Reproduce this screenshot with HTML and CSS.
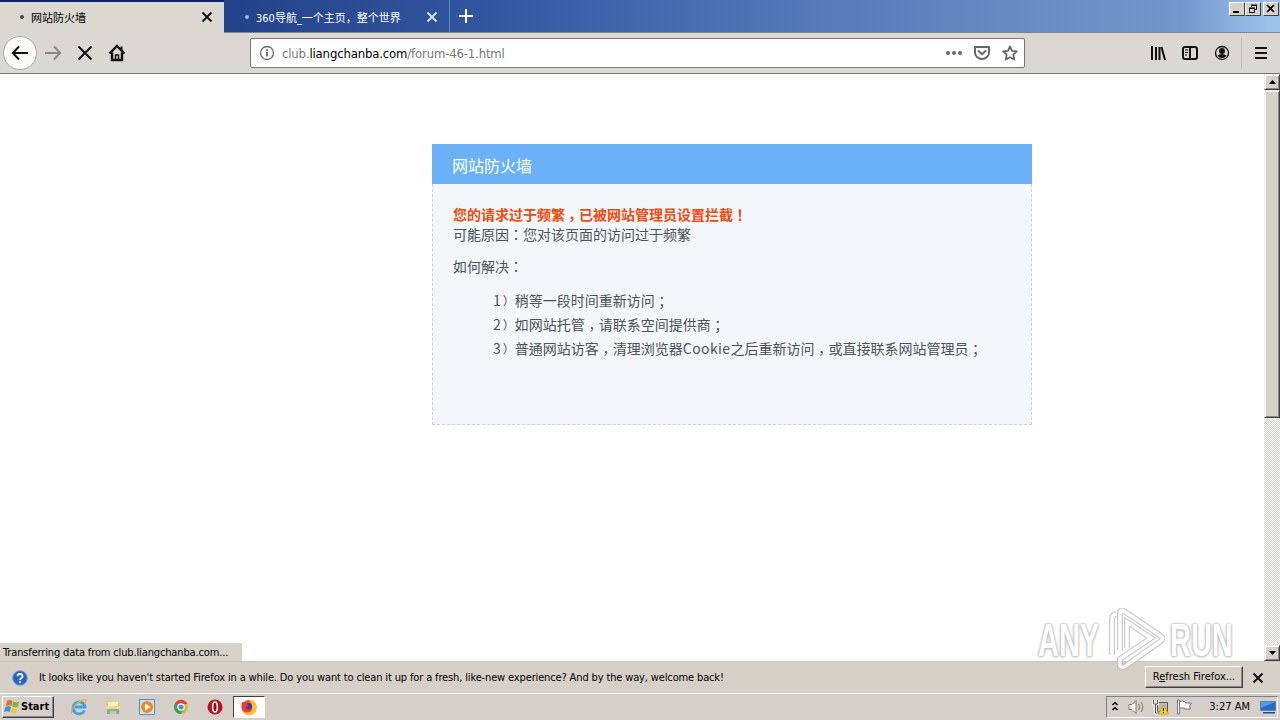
FILE: index.html
```html
<!DOCTYPE html>
<html lang="en">
<head>
  <meta charset="UTF-8" />
  <title>网站防火墙</title>
  <link rel="stylesheet" href="styles.css">
</head>
<body>
  <div class="tabs">
    <div class="tab active">
      <i class="dot"></i><span class="tab-title">网站防火墙</span>
      <svg width="12" height="12" viewBox="0 0 12 12"><path d="M1.5 1.5l9 9M10.500 1.500l-9 9"/></svg>
    </div>
    <div class="tab">
      <i class="dot"></i><span class="tab-title">360导航_一个主页，整个世界</span>
      <svg width="12" height="12" viewBox="0 0 12 12"><path d="M1.500 1.500l9 9M10.500 1.500l-9 9"/></svg>
    </div>
    <div class="new-tab"><svg width="16" height="16" viewBox="0 0 16 16"><path d="M8 1v14M1 8h14"/></svg></div>
    <div class="win-buttons">
      <b><svg width="14" height="12" viewBox="0 0 14 12"><path d="M3 9h6" stroke-width="2"/></svg></b>
      <b><svg width="14" height="12" viewBox="0 0 14 12"><path d="M5.500 4V2.500h5v4H9M5 2h6M3.500 5.500h5v4h-5zM3 5h6"/></svg></b>
      <b class="close"><svg width="14" height="12" viewBox="0 0 14 12"><path d="M3 2l7 7M10 2L3 9" stroke-width="1.700"/></svg></b>
    </div>
  </div>

  <div class="toolbar">
    <div class="nav">
      <span class="back"><svg width="18" height="18" viewBox="0 0 18 18"><path d="M17 9H2M8 2.500L1.800 9 8 15.500"/></svg></span>
      <svg class="off" width="18" height="18" viewBox="0 0 18 18"><path d="M1 9h15M10 2.500L16.200 9 10 15.500"/></svg>
      <svg width="18" height="18" viewBox="0 0 18 18"><path d="M2.500 2.500l13 13M15.500 2.500l-13 13"/></svg>
      <svg width="18" height="18" viewBox="0 0 18 18"><path d="M1.500 9.500L9 2l7.500 7.500M4 8.500V16h10V8.500" stroke-width="2.400"/><path d="M13.500 2.500v4"/><path d="M7.500 15v-4h3v4" stroke-width="1.500"/></svg>
    </div>
    <div class="urlbar">
      <svg width="16" height="16" viewBox="0 0 16 16"><circle cx="8" cy="8" r="6.500" stroke-width="1.300"/><path d="M8 7v4.500M8 4.200v1.800" stroke-width="1.800"/></svg>
      <span class="url">club.<em>liangchanba.com</em>/forum-46-1.html</span>
      <svg width="16" height="16" viewBox="0 0 16 16"><g class="fill"><circle cx="2" cy="8" r="2"/><circle cx="8" cy="8" r="2"/><circle cx="14" cy="8" r="2"/></g></svg>
      <svg width="16" height="16" viewBox="0 0 16 16"><path d="M1 2h14v5.500a7 6.500 0 0 1-14 0z" stroke-linejoin="round"/><path d="M4.500 6L8 9.200 11.500 6" stroke-linecap="round"/></svg>
      <svg width="16" height="16" viewBox="0 0 16 16"><path d="M8 1.500l2 4.300 4.800.6-3.500 3.300.9 4.800L8 12.200l-4.200 2.300.9-4.800L1.200 6.400 6 5.800z" stroke-linejoin="round" stroke-width="1.800"/></svg>
    </div>
    <div class="tools">
      <svg width="16" height="16" viewBox="0 0 16 16"><path d="M2 1v14M6 2v13M9.500 2v13M11.500 2l3.500 13"/></svg>
      <svg width="16" height="16" viewBox="0 0 16 16"><rect x="1" y="2" width="14" height="12" rx="2"/><path d="M8 2v12"/><path d="M3 5h3M3 7.500h3M3 10h2" stroke-width="1"/></svg>
      <svg width="16" height="16" viewBox="0 0 16 16"><circle cx="8" cy="8" r="6.500" stroke-width="1.300"/><g class="fill"><circle cx="8" cy="6" r="3"/><path d="M3.500 10.500Q8 7.500 12.500 10.500 11 13 8 13T3.500 10.500z"/></g></svg>
      <i class="line"></i>
      <svg width="14" height="16" viewBox="0 0 14 16"><path d="M1 3h12M1 8h12M1 13h12"/></svg>
    </div>
  </div>

  <div class="view">
    <div class="page">
      <div class="box">
        <h1>网站防火墙</h1>
        <div class="content">
          <p class="warn">您的请求过于频繁<i class="low">，</i>已被网站管理员设置拦截！</p>
          <p>可能原因：您对该页面的访问过于频繁</p>
          <p class="how">如何解决：</p>
          <ul>
            <li>1<i class="paren">）</i>稍等一段时间重新访问<i class="low semi">；</i></li>
            <li>2<i class="paren">）</i>如网站托管<i class="low">，</i>请联系空间提供商<i class="low semi">；</i></li>
            <li>3<i class="paren">）</i>普通网站访客<i class="low">，</i>清理浏览器<span class="latin">Cookie</span>之后重新访问<i class="low">，</i>或直接联系网站管理员<i class="low semi">；</i></li>
          </ul>
        </div>
      </div>
    </div>
    <div class="scrollbar">
      <div class="arrow"><svg width="7" height="4" viewBox="0 0 7 4"><path d="M0 4h7L3.500 0z"/></svg></div>
      <div class="thumb"></div>
      <div class="arrow down"><svg width="7" height="4" viewBox="0 0 7 4"><path d="M0 0h7L3.500 4z"/></svg></div>
    </div>
    <div class="status">Transferring data from club.liangchanba.com...</div>
  </div>

  <div class="notice">
    <svg width="16" height="16" viewBox="0 0 16 16"><circle cx="8" cy="8" r="7.300" fill="#2862c8" stroke="#7c9dce"/><path d="M5.500 6.200a2.500 2.300 0 1 1 3.700 2Q8 9 8 10" fill="none" stroke="#fff" stroke-width="1.800"/><circle cx="8" cy="12" r="1.100" fill="#fff"/></svg>
    <span class="message">It looks like you haven't started Firefox in a while. Do you want to clean it up for a fresh, like-new experience? And by the way, welcome back!</span>
    <button>R<u>e</u>fresh Firefox...</button>
    <svg class="dismiss" width="12" height="12" viewBox="0 0 12 12"><path d="M1.500 1.500l9 9M10.500 1.500l-9 9"/></svg>
  </div>

  <div class="taskbar">
    <div class="start">
      <svg width="16" height="16" viewBox="0 0 16 16"><path d="M3 2q3-2 5.500 0L7.300 7Q5 5.300 1.800 7z" fill="#ed6b29"/><path d="M9.200 2.500q3 1.500 6 0L14 7.500q-3 1.500-5.800 0z" fill="#75b943"/><path d="M1.500 8q3-1.700 5.500 0l-1.200 5Q3 11.300 0 13z" fill="#3d8fd8"/><path d="M7.800 8.500q3 1.500 5.800 0l-1.200 5q-3 1.500-5.900 0z" fill="#f6c62e"/></svg>
      <span>Start</span>
    </div>
    <div class="launch">
      <svg width="18" height="18" viewBox="0 0 18 18"><path d="M14.500 12.500A6 6 0 1 1 15 9H5" fill="none" stroke="#36a5dc" stroke-width="2.800"/><path d="M2 15.500C-1 12 9 2 15 1.500q2 .5 0 4" fill="none" stroke="#e0b23e" stroke-width="1.300"/></svg>
      <svg width="18" height="18" viewBox="0 0 18 18"><path d="M2 3h6l1 2h7v11H2z" fill="#ecc75a"/><path d="M4 4h10v6H4z" fill="#fff3bf"/><path d="M2 8h14v4H2z" fill="#f5dc84"/><path d="M3 16v-5h12v5h-3v-3H6v3z" fill="#63b2dc"/></svg>
      <svg width="18" height="18" viewBox="0 0 18 18"><path d="M1.500 1.500h15v15h-15z" fill="#c9e3f5" stroke="#4794c9"/><circle cx="9" cy="9" r="6" fill="#f18a19"/><path d="M7 5.500v7L12.500 9z" fill="#fff"/></svg>
      <svg width="18" height="18" viewBox="0 0 18 18"><circle cx="9" cy="9" r="7" fill="#ddb92f"/><path d="M3 5.300A7 7 0 0 1 15.500 6H9L6 10z" fill="#d9483b"/><path d="M3 5.300A7 7 0 0 0 9 16l3-5-6-1z" fill="#3aa257"/><circle cx="9" cy="9" r="3.200" fill="#4a8de0" stroke="#fff" stroke-width="1.200"/></svg>
      <svg width="18" height="18" viewBox="0 0 18 18"><circle cx="9" cy="9" r="7.500" fill="#b51722"/><ellipse cx="9" cy="9" rx="2.300" ry="5" fill="#8e1018" stroke="#fff" stroke-width="1.500"/></svg>
      <div class="running"><svg width="18" height="18" viewBox="0 0 18 18"><circle cx="9" cy="9.500" r="7.500" fill="#f4502a"/><path d="M9 2q7-1 7.500 7T9 17q-5 0-6-4 6 3 9-2 1-5-3-9z" fill="#ffc22c"/><circle cx="8.500" cy="8.500" r="3.600" fill="#423aa0"/><path d="M2 4q3 0 4 2l3 1-3 2q0 4 6 2-2 5-7 3-5-3-3-10z" fill="#f13a37"/></svg></div>
    </div>
    <div class="tray">
      <svg width="8" height="12" viewBox="0 0 8 12"><path d="M1.500 4l2.500-2.500L6.500 4M1.500 9L4 6.500 6.500 9" stroke="#000" stroke-width="1.500" fill="none"/></svg>
      <svg width="17" height="16" viewBox="0 0 17 16"><path d="M1 5.500h3l4-4v13l-4-4H1z" fill="#fff" stroke="#777"/><path d="M10.500 5q2 3 0 6M13 3q3.500 5 0 10" fill="none" stroke="#888" stroke-width="1.200"/></svg>
      <svg width="17" height="16" viewBox="0 0 17 16"><path d="M5.500 3.500h10v9h-10z" fill="#bbb" stroke="#555"/><path d="M1.500 1v4h4V1M3.500 5v9h4" fill="none" stroke="#fff" stroke-width="2.500"/><path d="M1.500 1v4h4V1M3.500 5v9h4" fill="none" stroke="#555"/><path d="M11.500 6l5 9h-10z" fill="#ffd91c" stroke="#b99500" stroke-width=".7"/><path d="M11.500 9v3M11.500 13v1" stroke="#222" stroke-width="1.200"/></svg>
      <svg width="17" height="16" viewBox="0 0 17 16"><path d="M1.500 1h2v14h-2z" fill="#fff" stroke="#777"/><path d="M3.500 2.500q3-1 6 .5v1h6l-2 3 1 3H8.500V9h-5z" fill="#fff" stroke="#777"/></svg>
      <span class="clock">3:27 AM</span>
      <svg width="16" height="14" viewBox="0 0 16 14"><path d="M.5 1.500h15v9H.5z" fill="#266cc4" stroke="#5b82af"/><path d="M1 2h14L1 8z" fill="#549be4"/><path d="M3 12h12v1.500H3z" fill="#1a4e88"/></svg>
    </div>
  </div>

  <div class="watermark">
    <span>ANY</span>
    <svg width="58" height="64" viewBox="0 0 58 64"><path class="shade" d="M5 47V11q0-4 4-5M13 42V5q0-4 4-2l37 25q3 3 0 5L20 57q-5 4-7 1v-7l31-21-24-16v26"/><path d="M5 47V11q0-4 4-5M13 42V5q0-4 4-2l37 25q3 3 0 5L20 57q-5 4-7 1v-7l31-21-24-16v26"/></svg>
    <span>RUN</span>
  </div>
</body>
</html>
```
FILE: styles.css
```css
* {
  box-sizing: border-box;
}
body {
  margin: 0;
  width: 1280px;
  height: 720px;
  overflow: hidden;
  position: relative;
  display: flex;
  flex-direction: column;
  background: #fff;
  color: #000;
  font-family: Tahoma, "DejaVu Sans Condensed", "Noto Sans CJK SC", sans-serif;
  font-size: 11px;
}
svg {
  flex: none;
  display: block;
}
.tabs svg, .toolbar svg, .dismiss {
  fill: none;
  stroke: #111;
  stroke-width: 2;
}
.tabs {
  height: 33px;
  flex: none;
  display: flex;
  background: linear-gradient(90deg, #1e3c7d 0, #25438a 240px, #3156a0 480px, #5277b8 780px, #6689c2 1000px, #7296cb 1180px, #9dc2ec 1270px);
  border-bottom: 1px solid #80868f;
}
.tab {
  width: 226px;
  padding: 1px 11px 0 21px;
  display: flex;
  align-items: center;
  color: #fff;
  border-right: 1px solid #7187b5;
}
.tab svg {
  margin-left: auto;
  stroke: #dbe5f5;
  stroke-width: 1.8;
}
.tab.active {
  width: 224px;
  height: 33px;
  background: #dbd8d2;
  color: #000;
  border-top: 2px solid #0a246a;
  border-right: 0;
  padding: 0 11px 1px 20px;
}
.tab.active svg {
  stroke: #111;
}
.dot {
  width: 4px;
  height: 4px;
  border-radius: 2px;
  background: #9dbbe6;
  margin-right: 7px;
}
.tab.active .dot {
  background: #444;
}
.tab-title {
  white-space: nowrap;
}
.new-tab {
  padding: 8px;
}
.new-tab svg {
  stroke: #fff;
}
.win-buttons {
  margin: 2px 1px 0 auto;
  display: flex;
}
.win-buttons b {
  width: 16px;
  height: 14px;
  background: #d6d2ca;
  border: 1px solid;
  border-color: #fff #404040 #404040 #fff;
}
.win-buttons .close {
  margin-left: 2px;
}
.win-buttons svg {
  stroke: #000;
  stroke-width: 1;
}
.toolbar {
  height: 41px;
  flex: none;
  display: flex;
  align-items: center;
  background: #dbd8d3;
  border-bottom: 1px solid #777;
}
.nav {
  width: 250px;
  padding-left: 3px;
  display: flex;
  align-items: center;
  gap: 14px;
}
.back {
  width: 34px;
  height: 34px;
  margin-right: -7px;
  border: 1px solid #aaa;
  border-radius: 50%;
  background: #fafaf8;
  display: flex;
  align-items: center;
  justify-content: center;
}
.toolbar .off {
  stroke: #8b8985;
}
.urlbar {
  width: 775px;
  height: 30px;
  padding: 0 6px 0 8px;
  display: flex;
  align-items: center;
  gap: 12px;
  background: #fff;
  border: 1px solid #777;
  border-radius: 2px;
}
.toolbar .urlbar svg {
  stroke: #666;
}
.url {
  flex: 1;
  margin-left: -5px;
  font-size: 13px;
  letter-spacing: -0.16px;
  color: #777;
}
.url em {
  font-style: normal;
  color: #000;
}
.toolbar .fill {
  fill: #111;
  stroke: none;
}
.toolbar .urlbar .fill {
  fill: #666;
}
.tools {
  margin-left: auto;
  padding-right: 12px;
  display: flex;
  align-items: center;
  gap: 16px;
}
.line {
  width: 1px;
  height: 32px;
  margin: 0 -4px 0 -5px;
  background: #c3c0bb;
}
.view {
  flex: 1;
  min-height: 0;
  display: flex;
  position: relative;
}
.page {
  width: 1264px;
  padding: 70px 0 0 432px;
  font-family: "Noto Sans CJK TC", sans-serif;
}
.box {
  width: 600px;
}
h1 {
  margin: 0;
  height: 40px;
  padding-left: 20px;
  background: #6bb1f7;
  color: #fff;
  font-size: 16px;
  font-weight: 400;
  line-height: 42px;
}
.content {
  height: 241px;
  padding: 20px 20px 0;
  background: #f3f7fb;
  border: 1px dashed #cdd0d4;
  border-top: 0;
  color: #4c5259;
  font-size: 14px;
  line-height: 20px;
}
.content p {
  margin: 0;
}
.content .warn {
  color: #f04a0c;
  font-weight: 700;
}
.content .how {
  margin-top: 12px;
}
.content i {
  font-style: normal;
}
/* full-width punctuation sits low and centred */
.low {
  line-height: 0;
  vertical-align: -4px;
}
.semi {
  vertical-align: -1px;
}
.paren {
  margin-left: 2px;
  font-size: 12px;
}
ul {
  list-style: none;
  margin: 12px 0;
  padding-left: 40px;
}
li {
  height: 24px;
  line-height: 24px;
  white-space: nowrap;
}
.latin {
  letter-spacing: 0.4px;
}
.scrollbar {
  width: 16px;
  display: flex;
  flex-direction: column;
  background: repeating-conic-gradient(#d6d2ca 0 25%, #fff 0 50%) 0 0 / 2px 2px;
}
.arrow, .thumb {
  background: #d6d2ca;
  border: 1px solid;
  border-color: #eee #404040 #404040 #eee;
  box-shadow: inset 1px 1px #fff, inset -1px -1px #888;
}
.arrow {
  height: 16px;
  display: flex;
  align-items: center;
  justify-content: center;
}
.thumb {
  height: 328px;
}
.down {
  margin-top: auto;
}
.status {
  position: absolute;
  left: 0;
  bottom: 0;
  width: 242px;
  height: 18px;
  padding-left: 3px;
  background: #d6d2ca;
  line-height: 20px;
  letter-spacing: -0.14px;
  white-space: nowrap;
}
.notice {
  height: 32px;
  flex: none;
  display: flex;
  align-items: center;
  padding: 0 16px 0 12px;
  background: #d6d0c8;
  border-top: 1px solid #c7c5bf;
}
.message {
  margin-left: 11px;
  letter-spacing: -0.14px;
  white-space: nowrap;
}
button {
  width: 98px;
  height: 22px;
  margin: -2px 9px 0 auto;
  padding: 0;
  background: #d6d0c8;
  border: 1px solid;
  border-color: #fff #404040 #404040 #fff;
  box-shadow: inset -1px -1px #888;
  color: #000;
  font: inherit;
  white-space: nowrap;
}
.taskbar {
  height: 27px;
  flex: none;
  display: flex;
  align-items: center;
  padding: 0 2px 1px;
  background: #d6cfc9;
  border-top: 1px solid #fff;
}
.start {
  width: 52px;
  height: 22px;
  display: flex;
  align-items: center;
  gap: 1px;
  padding-left: 1px;
  border: 1px solid;
  border-color: #fff #404040 #404040 #fff;
  box-shadow: inset -1px -1px #888;
  font-weight: 700;
}
.launch {
  display: flex;
  align-items: center;
  gap: 16px;
  margin-left: 16px;
}
.running {
  width: 32px;
  height: 22px;
  margin-left: -7px;
  display: flex;
  align-items: center;
  justify-content: center;
  background: #fff;
  border: 1px solid;
  border-color: #404040 #fff #fff #404040;
}
.tray {
  width: 172px;
  height: 22px;
  margin-left: auto;
  padding: 0 1px 0 4px;
  display: flex;
  align-items: center;
  gap: 7px;
  border: 1px solid;
  border-color: #808080 #fff #fff #808080;
}
.tray svg:nth-child(2) {
  margin-left: 2px;
}
.clock {
  margin: 0 3px 0 auto;
  white-space: nowrap;
}
.watermark {
  position: absolute;
  left: 1038px;
  top: 608px;
  width: 196px;
  height: 64px;
  display: flex;
  align-items: center;
  justify-content: space-between;
  opacity: 0.8;
}
.watermark span {
  color: #fff;
  font-family: "Liberation Sans", sans-serif;
  font-size: 46px;
  font-weight: 700;
  width: 64px;
  transform: scaleX(0.63);
  transform-origin: left;
  text-shadow: 0 0 2px #999, 0 0 3px #aaa, 0 1px 4px #bbb;
}
.watermark path {
  fill: none;
  stroke: #fff;
  stroke-width: 3.5;
}
.watermark .shade {
  stroke: #c0c0c0;
  stroke-width: 6;
}
```
